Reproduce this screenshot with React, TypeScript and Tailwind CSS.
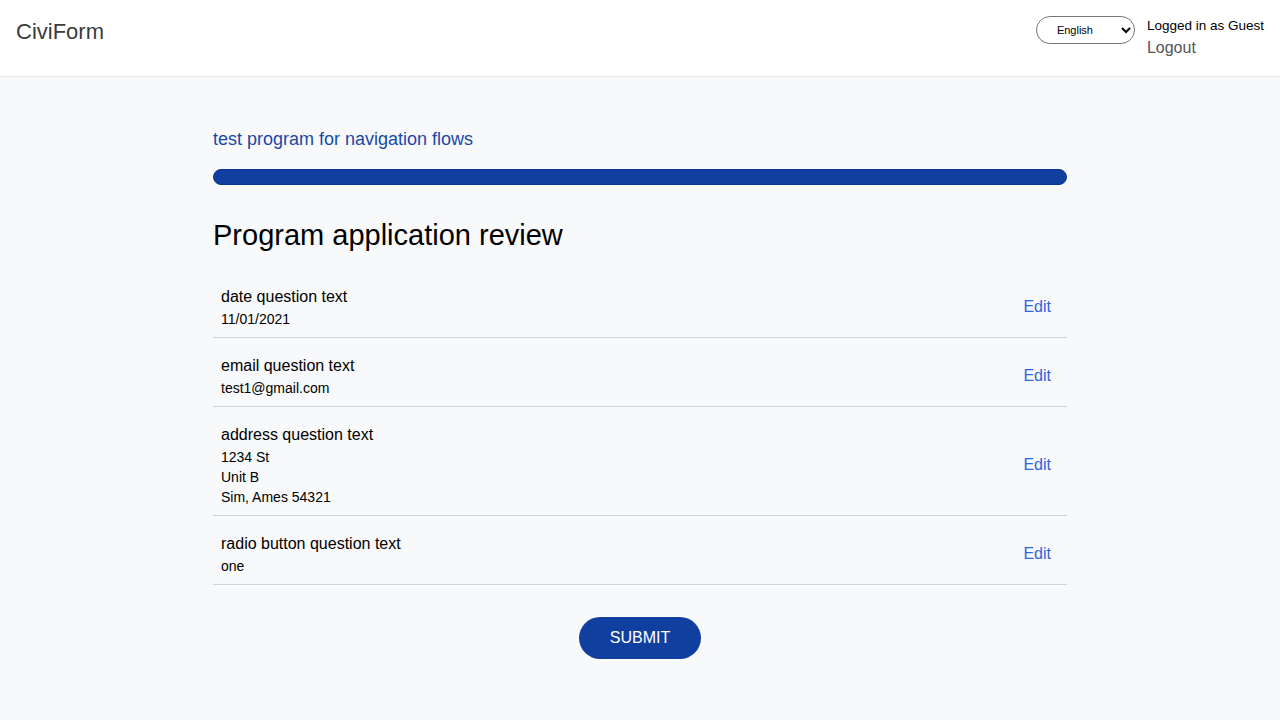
import { useState } from "react";

const answers = [
  { question: "date question text", lines: ["11/01/2021"] },
  { question: "email question text", lines: ["test1@gmail.com"] },
  {
    question: "address question text",
    lines: ["1234 St", "Unit B", "Sim, Ames 54321"],
  },
  { question: "radio button question text", lines: ["one"] },
];

export default function App() {
  const [lang, setLang] = useState("en");

  return (
    <div className="min-h-screen bg-[#f8f9fa] font-['Liberation_Sans',Arial,sans-serif] text-black">
      {/* Header */}
      <header className="flex h-[77px] items-start justify-between border-b border-[#e6e8ec] bg-white px-4">
        <div className="pt-[17px] text-[22px] leading-[30px] text-[#3b3b3b]">
          CiviForm
        </div>
        <div className="flex items-start gap-3 pt-4">
          <select
            value={lang}
            onChange={(e) => setLang(e.target.value)}
            className="h-[28px] w-[99px] rounded-full border border-[#767676] bg-white pl-4 pr-1 text-[11px] text-black"
          >
            <option value="en">English</option>
            <option value="es">Español</option>
          </select>
          <div className="flex flex-col pt-[1px]">
            <span className="text-[13.5px] leading-[18px]">Logged in as Guest</span>
            <a href="#" className="text-[16px] leading-[26px] text-[#555]">
              Logout
            </a>
          </div>
        </div>
      </header>

      {/* Main */}
      <main className="mx-auto w-[854px] pt-[50px] pb-16">
        <a href="#" className="block text-[18px] leading-[24px] text-[#1b48a8]">
          test program for navigation flows
        </a>

        <div className="mt-[18px] h-4 w-full rounded-full border border-[#0c3590] bg-[#113f9f]" />

        <h1 className="mt-[32px] text-[29px] leading-[36px]">
          Program application review
        </h1>

        <div className="mt-4">
          {answers.map((a) => (
            <div
              key={a.question}
              className="flex items-center justify-between border-b border-[#d0d3d8] pt-4 pr-4 pb-2 pl-2"
            >
              <div>
                <div className="text-[16px] leading-[24px]">{a.question}</div>
                {a.lines.map((l) => (
                  <div key={l} className="text-[14px] leading-[20px]">
                    {l}
                  </div>
                ))}
              </div>
              <a href="#" className="text-[16px] leading-[24px] text-[#2e64e0]">
                Edit
              </a>
            </div>
          ))}
        </div>

        <div className="mt-8 flex justify-center">
          <button className="h-[42px] w-[122px] rounded-full bg-[#113f9f] text-[16px] text-white">
            SUBMIT
          </button>
        </div>
      </main>
    </div>
  );
}
